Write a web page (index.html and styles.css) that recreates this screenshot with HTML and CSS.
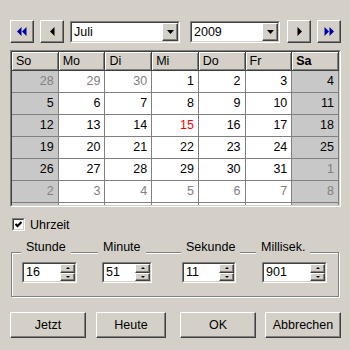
FILE: index.html
```html
<!DOCTYPE html>
<html lang="de">
<head>
  <meta charset="UTF-8" />
  <title>Datum wählen</title>
  <link rel="stylesheet" href="styles.css">
</head>
<body>
<div class="dlg">

  <div class="nav">
    <button class="raised navbtn">
      <svg width="10" height="9" viewBox="0 0 10 9"><polygon points="0,4.5 4.5,0 4.5,9" fill="#0000a8"/><polygon points="5,4.5 9.5,0 9.5,9" fill="#0000a8"/></svg>
    </button>
    <button class="raised navbtn prev">
      <svg width="5" height="9" viewBox="0 0 5 9"><polygon points="0,4.5 4.5,0 4.5,9" fill="#000"/></svg>
    </button>
    <div class="combo month">
      <div class="combo-in">
        <span class="combo-text">Juli</span>
        <span class="raised combo-btn"><svg width="7" height="4" viewBox="0 0 7 4"><polygon points="0,0 7,0 3.5,4" fill="#000"/></svg></span>
      </div>
    </div>
    <div class="combo year">
      <div class="combo-in">
        <span class="combo-text">2009</span>
        <span class="raised combo-btn"><svg width="7" height="4" viewBox="0 0 7 4"><polygon points="0,0 7,0 3.5,4" fill="#000"/></svg></span>
      </div>
    </div>
    <button class="raised navbtn next">
      <svg width="5" height="9" viewBox="0 0 5 9"><polygon points="0.5,0 5,4.5 0.5,9" fill="#000"/></svg>
    </button>
    <button class="raised navbtn last">
      <svg width="10" height="9" viewBox="0 0 10 9"><polygon points="0.5,0 5,4.5 0.5,9" fill="#0000a8"/><polygon points="5.5,0 10,4.5 5.5,9" fill="#0000a8"/></svg>
    </button>
  </div>

  <div class="cal">
    <div class="cal-in">
      <div class="hd">So</div><div class="hd">Mo</div><div class="hd">Di</div><div class="hd">Mi</div><div class="hd">Do</div><div class="hd">Fr</div><div class="hd sat">Sa</div>

      <div class="d we off">28</div><div class="d off">29</div><div class="d off">30</div><div class="d">1</div><div class="d">2</div><div class="d">3</div><div class="d we">4</div>
      <div class="d we">5</div><div class="d">6</div><div class="d">7</div><div class="d">8</div><div class="d">9</div><div class="d">10</div><div class="d we">11</div>
      <div class="d we">12</div><div class="d">13</div><div class="d">14</div><div class="d today">15</div><div class="d">16</div><div class="d">17</div><div class="d we">18</div>
      <div class="d we">19</div><div class="d">20</div><div class="d">21</div><div class="d">22</div><div class="d">23</div><div class="d">24</div><div class="d we">25</div>
      <div class="d we">26</div><div class="d">27</div><div class="d">28</div><div class="d">29</div><div class="d">30</div><div class="d">31</div><div class="d we off">1</div>
      <div class="d we off">2</div><div class="d off">3</div><div class="d off">4</div><div class="d off">5</div><div class="d off">6</div><div class="d off">7</div><div class="d we off">8</div>
      <div class="d we"></div><div class="d"></div><div class="d"></div><div class="d"></div><div class="d"></div><div class="d"></div><div class="d we"></div>
    </div>
  </div>

  <label class="chk">
    <span class="box"><span class="box-in"><svg width="7" height="7" viewBox="0 0 7 7"><polyline points="0.5,3 2.5,5 6.5,1" fill="none" stroke="#000" stroke-width="2"/></svg></span></span>
    Uhrzeit
  </label>

  <div class="time">
    <div class="time-head">
      <span>Stunde</span>
      <span>Minute</span>
      <span>Sekunde</span>
      <span>Millisek.</span>
    </div>
    <div class="time-fields">
      <div class="spin hour"><div class="spin-in"><span class="spin-val">16</span><span class="spin-btns"><span class="raised up"></span><span class="raised down"></span></span></div></div>
      <div class="spin minute"><div class="spin-in"><span class="spin-val">51</span><span class="spin-btns"><span class="raised up"></span><span class="raised down"></span></span></div></div>
      <div class="spin second"><div class="spin-in"><span class="spin-val">11</span><span class="spin-btns"><span class="raised up"></span><span class="raised down"></span></span></div></div>
      <div class="spin milli"><div class="spin-in"><span class="spin-val">901</span><span class="spin-btns"><span class="raised up"></span><span class="raised down"></span></span></div></div>
    </div>
  </div>

  <div class="actions">
    <button class="raised act now">Jetzt</button>
    <button class="raised act today-btn">Heute</button>
    <button class="raised act ok">OK</button>
    <button class="raised act cancel">Abbrechen</button>
  </div>

</div>
</body>
</html>
```

FILE: styles.css
```css
body {
  margin: 0;
  background: #d4d0c8;
  font-family: "Liberation Sans", Arial, sans-serif;
  font-size: 12.5px;
  color: #000;
}

.dlg {
  width: 350px;
  height: 350px;
  padding-top: 20px;
  box-sizing: border-box;
  overflow: hidden;
}

/* erhabene Windows-Kante */
.raised {
  background: #d4d0c8;
  border: 1px solid;
  border-color: #fff #404040 #404040 #fff;
  box-shadow: inset -1px -1px #808080;
  box-sizing: border-box;
  padding: 0;
  margin: 0;
  display: flex;
  align-items: center;
  justify-content: center;
  font: inherit;
  color: #000;
}

/* Kopfzeile */
.nav {
  display: flex;
  align-items: center;
  height: 23px;
  padding-left: 10px;
}

.navbtn {
  width: 24px;
  height: 23px;
}
.nav .prev { margin-left: 6px; }
.nav .next { margin-left: 7px; }
.nav .last { margin-left: 6px; }

.combo {
  height: 22px;
  border: 1px solid;
  border-color: #808080 #fff #fff #808080;
  box-sizing: border-box;
  display: flex;
}
.combo.month { width: 110px; margin-left: 6px; }
.combo.year { width: 90px; margin-left: 10px; }

.combo-in {
  flex: 1;
  display: flex;
  background: #fff;
  border: 1px solid;
  border-color: #404040 #d4d0c8 #d4d0c8 #404040;
}

.combo-text {
  flex: 1;
  padding-left: 2px;
  line-height: 18px;
}

.combo-btn {
  width: 16px;
  height: 18px;
}

/* Kalender */
.cal {
  margin: 7px 0 0 10px;
  width: 331px;
  height: 157px;
  border: 1px solid;
  border-color: #808080 #fff #fff #808080;
  box-sizing: border-box;
}

.cal-in {
  height: 100%;
  box-sizing: border-box;
  border: 1px solid;
  border-color: #404040 #d4d0c8 #d4d0c8 #404040;
  overflow: hidden;
  display: grid;
  grid-template-columns: repeat(7, 1fr);
  grid-template-rows: 19px;
  grid-auto-rows: 22px;
  align-content: start;
}

.hd {
  background: #d4d0c8;
  border-right: 1px solid #404040;
  border-bottom: 1px solid #404040;
  box-shadow: inset 1px 1px #fff, inset -1px -1px #808080;
  padding-left: 4px;
  line-height: 18px;
}
.hd.sat { font-weight: bold; }

.d {
  background: #fff;
  border-right: 1px solid #808080;
  border-bottom: 1px solid #808080;
  text-align: right;
  padding-right: 4px;
  line-height: 21px;
}
.d.we { background: #c8c8c8; }
.d.off { color: #808080; }
.d.today { color: #f00; }

/* Uhrzeit-Schalter */
.chk {
  display: flex;
  align-items: center;
  margin: 11px 0 0 12px;
  height: 13px;
  gap: 5px;
}

.box {
  width: 13px;
  height: 13px;
  box-sizing: border-box;
  border: 1px solid;
  border-color: #808080 #fff #fff #808080;
  display: flex;
}

.box-in {
  flex: 1;
  background: #fff;
  border: 1px solid;
  border-color: #404040 #d4d0c8 #d4d0c8 #404040;
  display: flex;
  align-items: center;
  justify-content: center;
}

/* Zeitfelder */
.time {
  margin: 21px 0 0 11px;
  width: 328px;
  height: 45px;
  box-sizing: border-box;
  border: 1px solid #808080;
  box-shadow: inset 1px 1px #fff, 1px 1px #fff;
}

.time-head {
  display: grid;
  grid-template-columns: 77px 83px 75px auto;
  padding-left: 9px;
  margin-top: -13px;
}

.time-head span {
  justify-self: start;
  background: #d4d0c8;
  padding: 0 5px;
  line-height: 15px;
}

.time-fields {
  display: grid;
  grid-template-columns: 80px 80px 80px auto;
  padding-left: 10px;
  margin-top: 7px;
}

.spin {
  height: 21px;
  box-sizing: border-box;
  border: 1px solid;
  border-color: #808080 #fff #fff #808080;
  display: flex;
}
.spin.hour { width: 55px; }
.spin.minute { width: 50px; }
.spin.second { width: 54px; }
.spin.milli { width: 65px; }

.spin-in {
  flex: 1;
  display: flex;
  background: #fff;
  border: 1px solid;
  border-color: #404040 #d4d0c8 #d4d0c8 #404040;
}

.spin-val {
  flex: 1;
  padding-left: 2px;
  line-height: 17px;
}

.spin-btns {
  width: 15px;
  display: flex;
  flex-direction: column;
}

.spin-btns .raised {
  flex: 1;
}

.up::before,
.down::before {
  content: "";
  border-left: 2px solid transparent;
  border-right: 2px solid transparent;
}
.up::before { border-bottom: 2px solid #000; }
.down::before { border-top: 2px solid #000; }

/* Schaltflächen */
.actions {
  display: flex;
  margin-top: 15px;
  padding-left: 10px;
}

.act {
  width: 76px;
  height: 26px;
}
.act.today-btn { width: 70px; margin-left: 10px; }
.act.ok { margin-left: 14px; }
.act.cancel { margin-left: 9px; }
```
